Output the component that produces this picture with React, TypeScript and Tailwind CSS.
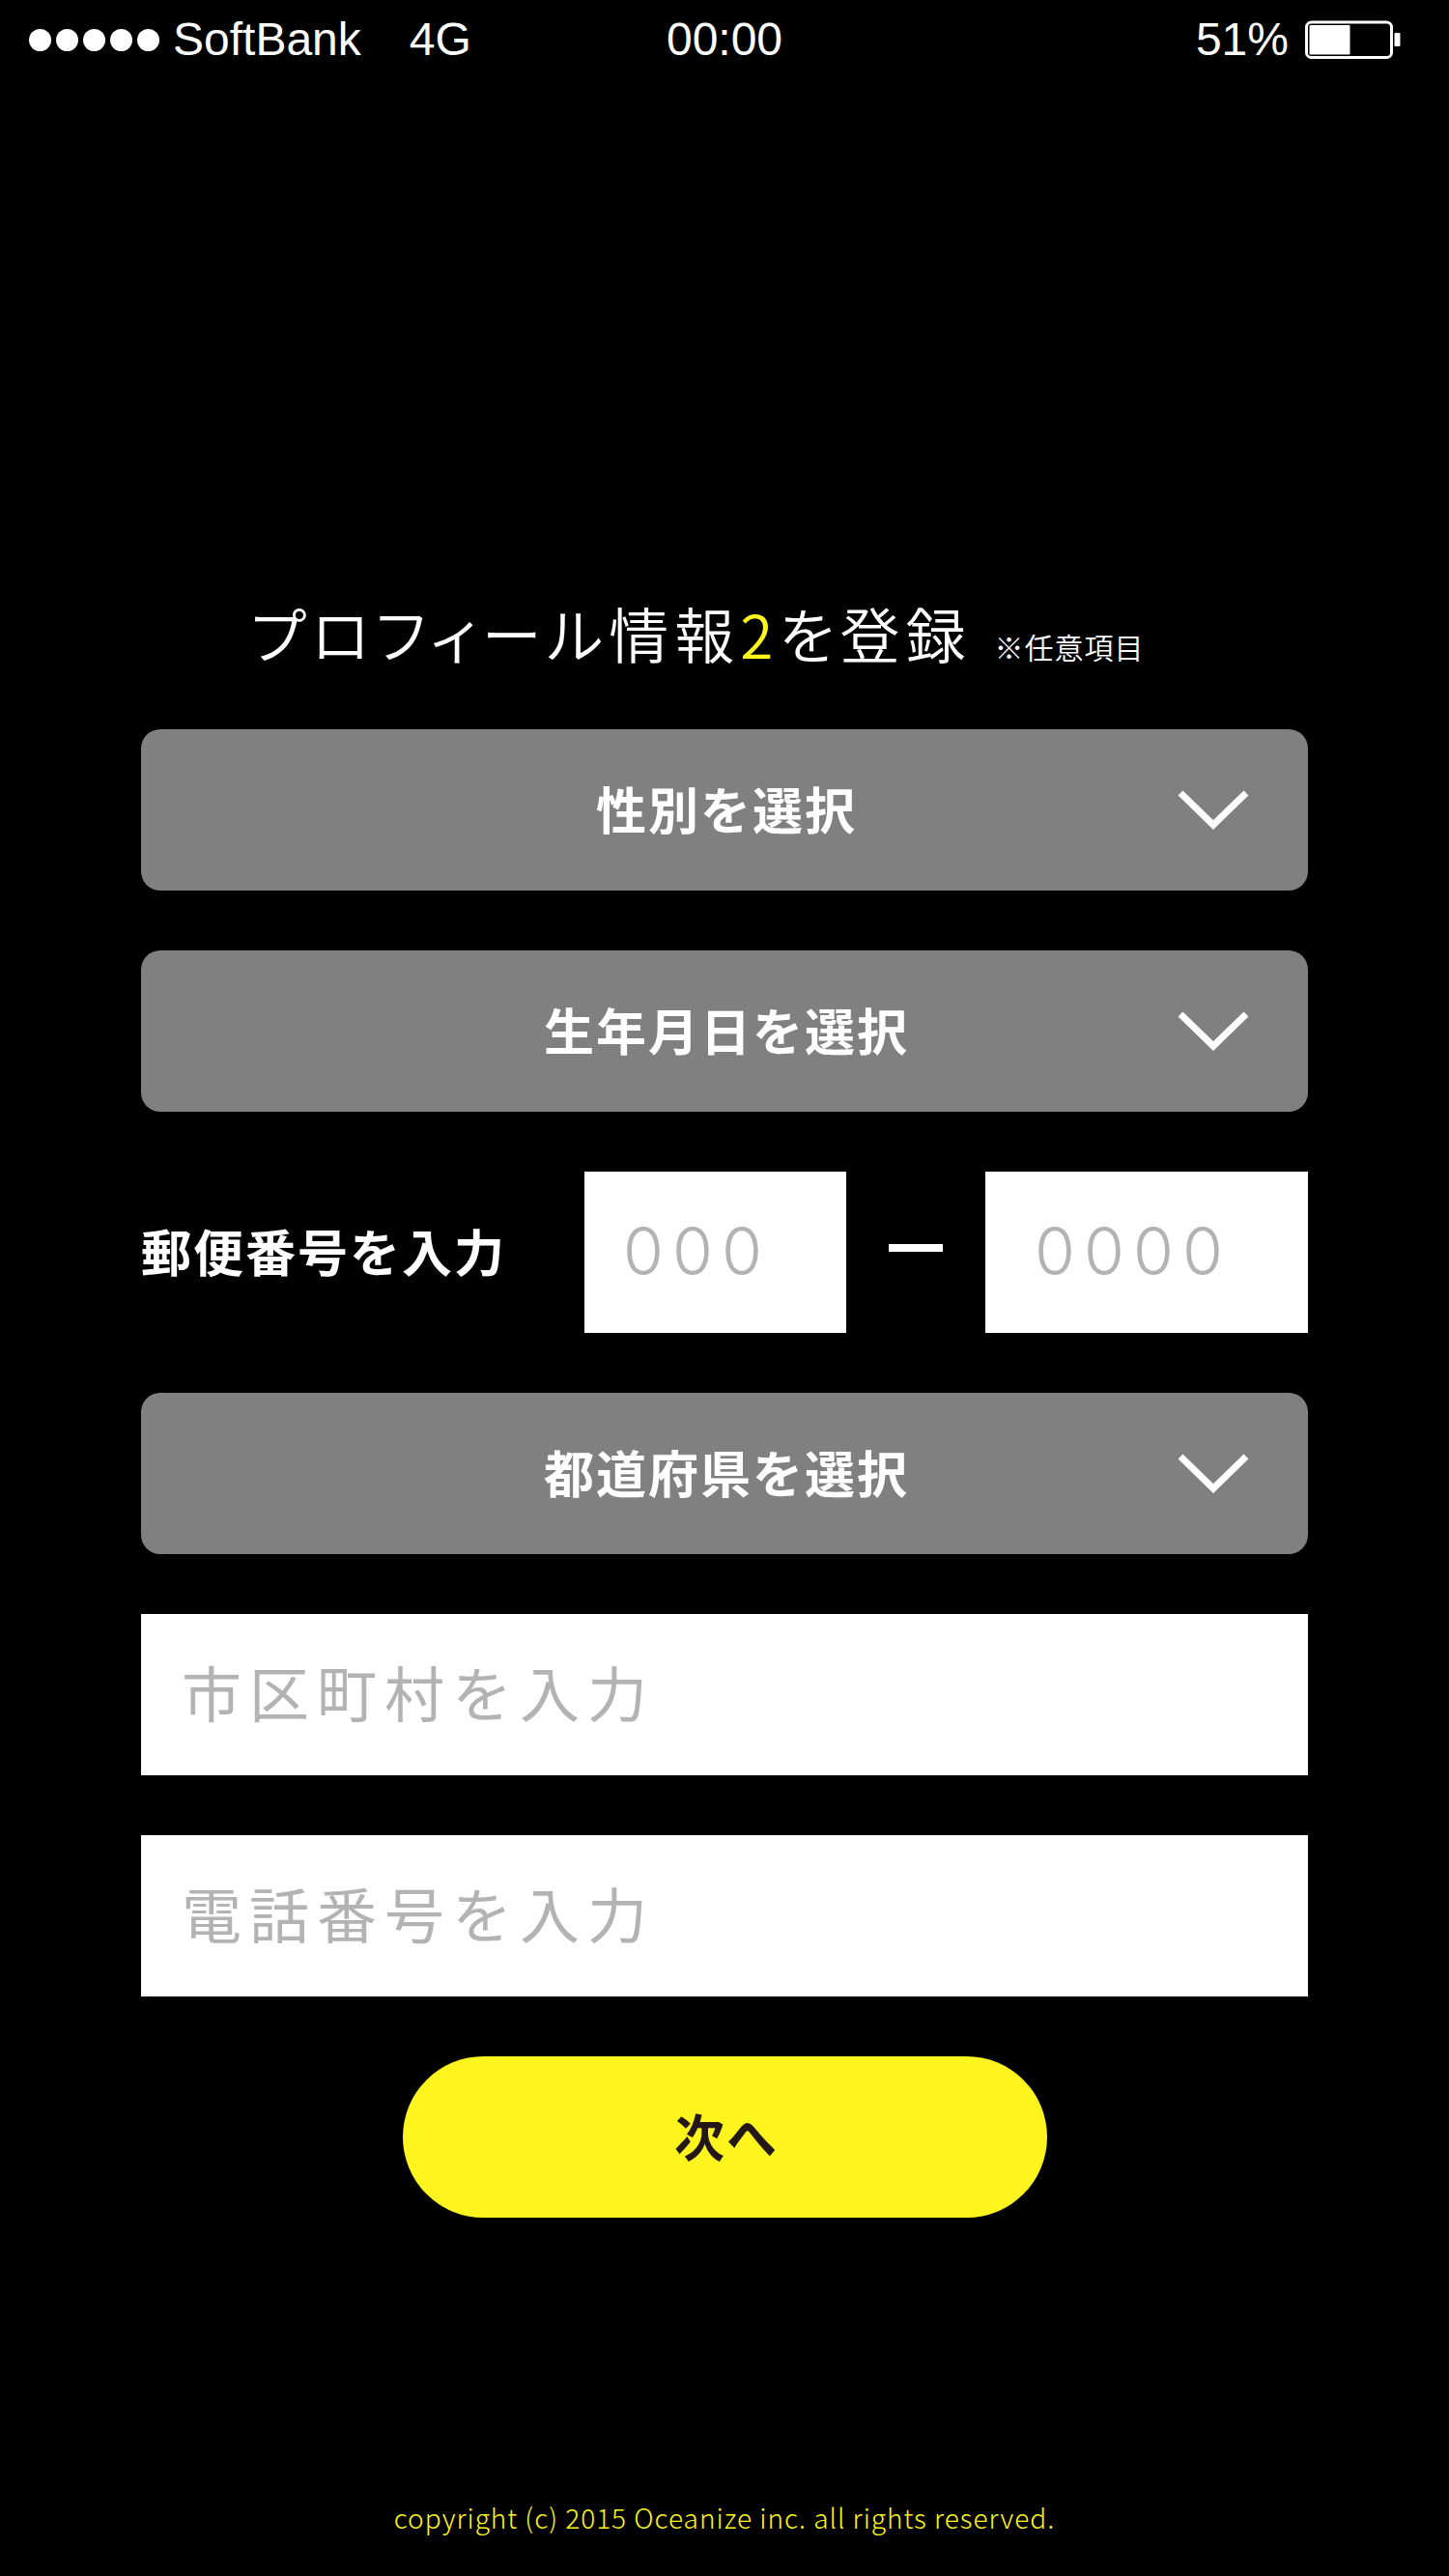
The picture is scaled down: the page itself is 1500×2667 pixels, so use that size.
import React from 'react';

function Chevron() {
  return (
    <svg
      aria-hidden="true"
      viewBox="0 0 76 46"
      className="pointer-events-none absolute right-[60px] h-[46px] w-[76px]"
      fill="none"
      stroke="white"
      strokeWidth="7"
    >
      <path d="M4 5L38 38L72 5" />
    </svg>
  );
}

function Picker({ label }: { label: string }) {
  return (
    <div className="relative flex items-center">
      <select
        aria-label={label}
        className="h-[167px] w-full appearance-none rounded-[20px] bg-[#808080] pb-1 pl-1 text-center text-[52px] font-bold tracking-[2px] text-white [text-align-last:center]"
      >
        <option>{label}</option>
      </select>
      <Chevron />
    </div>
  );
}

const field =
  'h-[167px] min-w-0 rounded-none bg-white text-black placeholder:text-[#b3b3b3] placeholder:opacity-100 focus:outline-none';
const textField = field + ' w-full pb-2 pl-[42px] text-[62px] font-normal tracking-[8px]';
const zipField = field + " pb-1 font-['Inter',sans-serif] text-[68px] font-light tracking-[9px]";

export default function App() {
  return (
    <div className="flex min-h-screen flex-col bg-black font-['Noto_Sans_CJK_JP',sans-serif] text-white">
      <header className="grid h-[82px] grid-cols-3 items-center px-[30px] font-['Liberation_Sans',sans-serif] text-[48px]">
        <div className="flex items-center whitespace-nowrap">
          <div className="flex gap-[5px]">
            {[0, 1, 2, 3, 4].map((n) => (
              <span key={n} className="size-[23px] rounded-full bg-white" />
            ))}
          </div>
          <span className="ml-[14px]">SoftBank</span>
          <span className="ml-[50px]">4G</span>
        </div>
        <div className="text-center">00:00</div>
        <div className="flex items-center justify-end gap-4 pr-5">
          <span>51%</span>
          <svg aria-hidden="true" viewBox="0 0 100 40" className="h-10 w-[100px]">
            <rect x="2.5" y="2" width="88" height="36.5" rx="5" fill="none" stroke="white" strokeWidth="3" />
            <rect x="5.5" y="5" width="42" height="30.5" rx="1" fill="white" />
            <rect x="93.5" y="13" width="6" height="14" rx="1" fill="white" />
          </svg>
        </div>
      </header>

      <main className="px-[146px] pt-[525px]">
        <h1 className="mb-[38px] flex items-baseline justify-center gap-6 pr-14 leading-[96px]">
          <span className="text-[62px] font-[350] tracking-[6px] [font-feature-settings:'palt']">
            プロフィール情報<span className="text-[#fff51e]">2</span>を登録
          </span>
          <span className="text-[30px] font-[350] tracking-[1px]">※任意項目</span>
        </h1>
        <form className="flex flex-col gap-[62px]">
          <Picker label="性別を選択" />
          <Picker label="生年月日を選択" />
          <div className="flex items-center justify-between">
            <label htmlFor="zip1" className="pb-1 text-[52px] font-bold tracking-[2px]">
              郵便番号を入力
            </label>
            <div className="flex items-center gap-11">
              <input id="zip1" placeholder="000" className={zipField + ' w-[271px] pl-10'} />
              <span className="mb-[10px] h-2 w-14 bg-white" />
              <input aria-label="郵便番号 下4桁" placeholder="0000" className={zipField + ' w-[334px] pl-[51px]'} />
            </div>
          </div>
          <Picker label="都道府県を選択" />
          <input aria-label="市区町村" placeholder="市区町村を入力" className={textField} />
          <input aria-label="電話番号" placeholder="電話番号を入力" className={textField} />
          <button
            type="button"
            className="h-[167px] w-[667px] self-center rounded-full bg-[#fff51e] pb-1 pl-1 text-[52px] font-bold tracking-[2px] text-[#231815]"
          >
            次へ
          </button>
        </form>
      </main>

      <footer className="mt-auto pb-10 text-center text-[28px] font-light tracking-[1px] text-[#fff51e]">
        copyright (c) 2015 Oceanize inc. all rights reserved.
      </footer>
    </div>
  );
}
